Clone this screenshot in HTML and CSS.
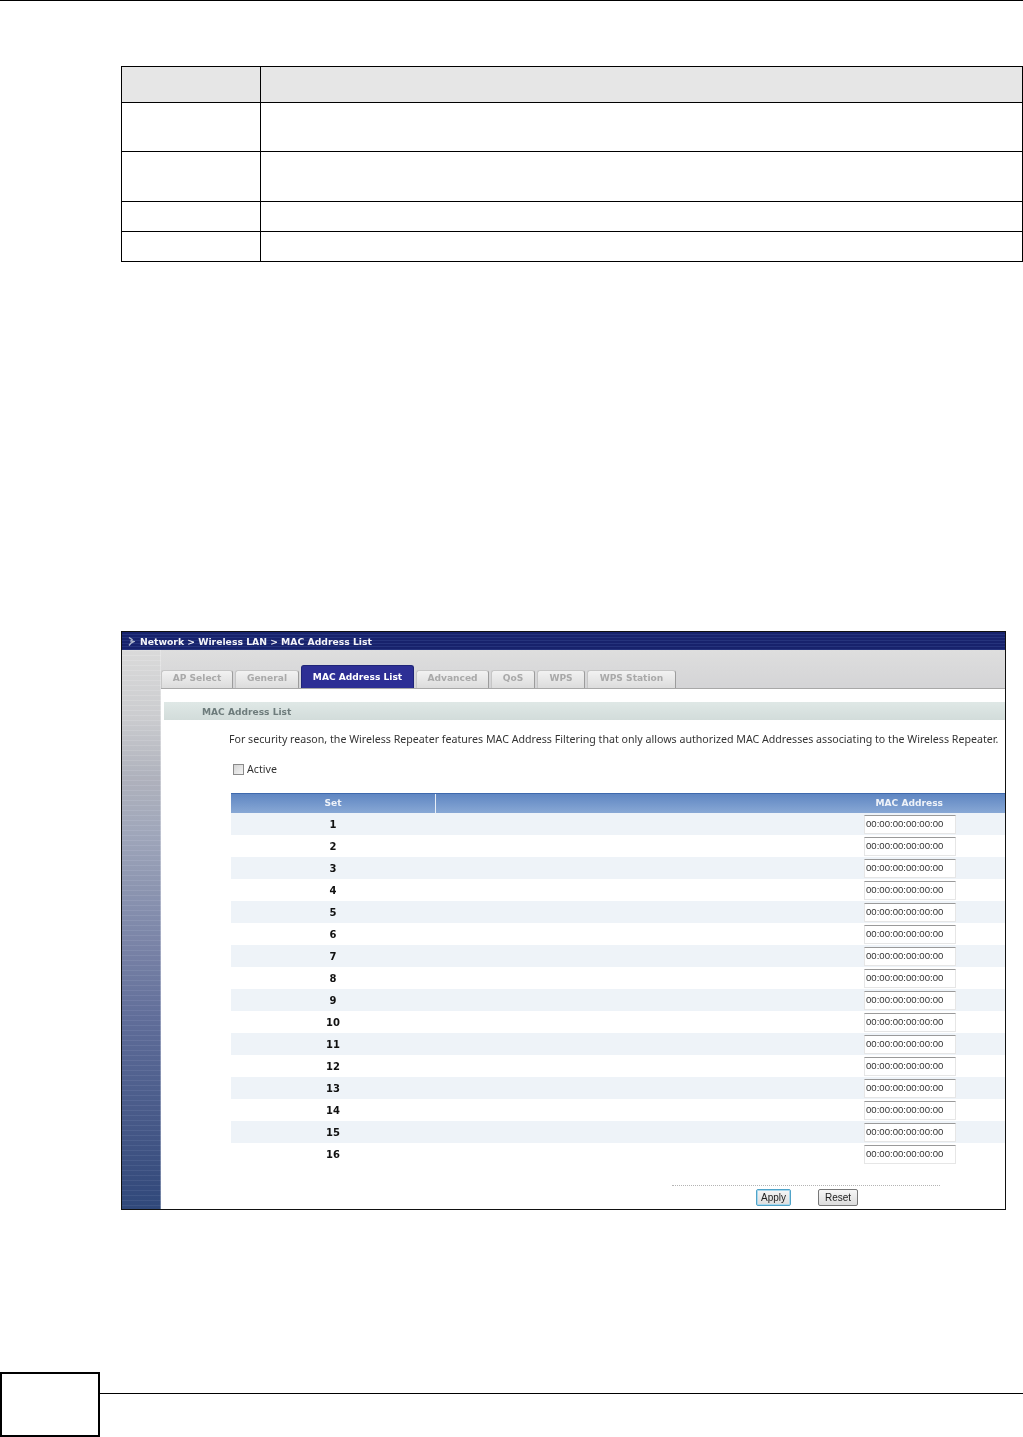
FILE: index.html
```html
<!DOCTYPE html>
<html lang="en">
<head>
<meta charset="utf-8">
<title>MAC Address List</title>
<link rel="stylesheet" href="styles.css">
</head>
<body>
<div class="page">
  <div class="top-rule"></div>
  <table class="doc-table">
    <tr class="head"><th></th><th></th></tr>
    <tr class="r49"><td></td><td></td></tr>
    <tr class="r50"><td></td><td></td></tr>
    <tr class="r30"><td></td><td></td></tr>
    <tr class="r30"><td></td><td></td></tr>
  </table>
  <div class="shot">
    <div class="title-bar">
      <svg class="crumb" width="7" height="11" viewBox="0 0 7 11"><path d="M1 1.5l3 2-1 1.500 3 0.500-3 1.500-2 2.500" fill="none" stroke="#aeb6cc" stroke-width="1.400"/></svg>
      <span>Network &gt; Wireless LAN &gt; MAC Address List</span>
    </div>
    <div class="shot-body">
      <div class="side"></div>
      <div class="main">
        <div class="tabs">
          <div class="tab w72"><span>AP Select</span></div>
          <div class="tab w65"><span>General</span></div>
          <div class="tab active"><span>MAC Address List</span></div>
          <div class="tab w73"><span>Advanced</span></div>
          <div class="tab w44"><span>QoS</span></div>
          <div class="tab w48"><span>WPS</span></div>
          <div class="tab w89"><span>WPS Station</span></div>
        </div>
        <div class="section">MAC Address List</div>
        <p class="intro">For security reason, the Wireless Repeater features MAC Address Filtering that only allows authorized MAC Addresses associating to the Wireless Repeater.</p>
        <label class="active-row"><span class="check"></span>Active</label>
        <div class="mac-table">
          <div class="mac-head"><div class="set-h">Set</div><div class="mac-h"><span>MAC Address</span></div></div>
          <div class="mac-row"><b>1</b><div class="field">00:00:00:00:00:00</div></div>
          <div class="mac-row"><b>2</b><div class="field">00:00:00:00:00:00</div></div>
          <div class="mac-row"><b>3</b><div class="field">00:00:00:00:00:00</div></div>
          <div class="mac-row"><b>4</b><div class="field">00:00:00:00:00:00</div></div>
          <div class="mac-row"><b>5</b><div class="field">00:00:00:00:00:00</div></div>
          <div class="mac-row"><b>6</b><div class="field">00:00:00:00:00:00</div></div>
          <div class="mac-row"><b>7</b><div class="field">00:00:00:00:00:00</div></div>
          <div class="mac-row"><b>8</b><div class="field">00:00:00:00:00:00</div></div>
          <div class="mac-row"><b>9</b><div class="field">00:00:00:00:00:00</div></div>
          <div class="mac-row"><b>10</b><div class="field">00:00:00:00:00:00</div></div>
          <div class="mac-row"><b>11</b><div class="field">00:00:00:00:00:00</div></div>
          <div class="mac-row"><b>12</b><div class="field">00:00:00:00:00:00</div></div>
          <div class="mac-row"><b>13</b><div class="field">00:00:00:00:00:00</div></div>
          <div class="mac-row"><b>14</b><div class="field">00:00:00:00:00:00</div></div>
          <div class="mac-row"><b>15</b><div class="field">00:00:00:00:00:00</div></div>
          <div class="mac-row"><b>16</b><div class="field">00:00:00:00:00:00</div></div>
        </div>
        <div class="actions">
          <div class="dots"></div>
          <div class="buttons"><div class="btn apply">Apply</div><div class="btn reset">Reset</div></div>
        </div>
      </div>
    </div>
  </div>
  <footer class="foot">
    <div class="page-box"></div>
    <div class="foot-rule"></div>
  </footer>
</div>
</body>
</html>
```

FILE: styles.css
```css
* { box-sizing: border-box; }
html, body { margin: 0; padding: 0; background: #fff; }
body { font-family: "DejaVu Sans", sans-serif; color: #333; }
.page { width: 1023px; height: 1437px; display: flex; flex-direction: column; overflow: hidden; }
.top-rule { height: 1px; background: #000; flex: none; }

.doc-table { flex: none; width: 902px; margin: 65px 0 0 121px; border-collapse: collapse; table-layout: fixed; }
.doc-table th, .doc-table td { border: 1px solid #000; padding: 0; }
.doc-table th:first-child, .doc-table td:first-child { width: 139px; }
.doc-table th { background: #e6e6e6; }
.head { height: 36px; }
.r49 { height: 49px; }
.r50 { height: 50px; }
.r30 { height: 30px; }

.shot { flex: none; width: 885px; height: 579px; margin: 369px 0 0 121px; border: 1px solid #111; display: flex; flex-direction: column; filter: blur(.35px); }
.title-bar { flex: none; height: 18px; display: flex; align-items: center; gap: 5px; padding-left: 6px; color: #f4f4f8; font-weight: 700; font-size: 9.25px; background: repeating-linear-gradient(180deg, #17226c 0, #17226c 2px, #25337c 2px, #25337c 3px); }
.crumb { flex: none; }
.shot-body { flex: 1; display: flex; min-height: 0; }
.side { flex: none; width: 39px; border-right: 1px solid rgba(255,255,255,.3); background: repeating-linear-gradient(180deg, rgba(255,255,255,.06) 0, rgba(255,255,255,.06) 1px, rgba(0,0,0,.02) 1px, rgba(0,0,0,.02) 5px), linear-gradient(180deg, #dedede 0, #cfd0d3 12%, #b2b5c0 23%, #a2a9be 33%, #626f9c 66%, #31497c 100%); }
.main { flex: 1; min-width: 0; display: flex; flex-direction: column; background: #fff; }

.tabs { flex: none; height: 39px; display: flex; align-items: flex-end; gap: 2px; border-bottom: 1px solid #a8a8a8; background: linear-gradient(180deg, #dedede 0, #d4d4d6 100%); }
.tab { height: 18px; display: flex; align-items: center; justify-content: center; padding-bottom: 3px; font-size: 9.1px; font-weight: 700; color: #a9a9a9; background: linear-gradient(180deg, #f2f2f2, #dcdcdc); border: 1px solid #c6c6c6; border-bottom: 0; border-right-color: #9c9c9c; border-radius: 3px 3px 0 0; }
.w72 { width: 72px; }
.w65 { width: 64px; }
.w73 { width: 73px; }
.w44 { width: 44px; }
.w48 { width: 48px; }
.w89 { width: 89px; }
.tab.active { width: 113px; height: 23px; padding-bottom: 1px; color: #fff; background: #2d2f95; border-color: #1e2478; }

.section { flex: none; height: 18px; margin: 13px 0 0 3px; padding: 1px 0 0 38px; display: flex; align-items: center; font-size: 9.1px; font-weight: 700; color: #6e7c7c; background: linear-gradient(180deg, #dfe8e6, #d2dcda); }
.intro { flex: none; margin: 12px 0 0 68px; height: 14px; line-height: 14px; font-family: "Noto Sans", sans-serif; font-size: 10.65px; color: #333; white-space: nowrap; }
.active-row { flex: none; height: 14px; margin: 16px 0 0 72px; display: flex; align-items: center; gap: 3px; font-family: "Noto Sans", sans-serif; font-size: 10.65px; color: #333; }
.check { width: 11px; height: 11px; border: 1px solid #8a8a8a; background: linear-gradient(135deg, #d4d4d4, #f4f4f4); }

.mac-table { flex: none; margin: 17px 0 0 70px; }
.mac-head { height: 20px; display: grid; grid-template-columns: 205px 1fr; border-top: 1px solid #3e69ad; background: linear-gradient(180deg, #5f86c2, #88a8d5); color: #eef2f8; font-size: 9.1px; font-weight: 700; }
.set-h { display: flex; align-items: center; justify-content: center; padding-bottom: 1px; border-right: 1px solid #e8eef6; }
.mac-h { display: flex; align-items: center; justify-content: flex-end; padding: 0 62px 1px 0; }
.mac-row { height: 22px; display: grid; grid-template-columns: 204px 1fr; align-items: center; justify-items: center; }
.mac-row:nth-child(even) { background: #eef3f8; }
.mac-row b { font-size: 10px; color: #111; }
.field { justify-self: end; margin-right: 49px; width: 92px; height: 19px; display: flex; align-items: center; padding: 0 0 1px 1px; background: #fff; border: 1px solid #e6e6e6; border-top-color: #9a9a9a; font-family: "Liberation Sans", sans-serif; font-size: 9.6px; color: #333; white-space: nowrap; }

.actions { flex: none; margin-top: 20px; }
.dots { margin-left: 511px; width: 268px; border-top: 1px dotted #b4b4b4; }
.buttons { display: flex; margin: 3px 0 0 595px; gap: 27px; }
.btn { height: 17px; display: flex; align-items: center; justify-content: center; font-family: "Liberation Sans", sans-serif; font-size: 10px; color: #222; border-radius: 2px; background: linear-gradient(180deg, #f6f6f6, #dcdcdc); border: 1px solid #777; }
.apply { width: 35px; border-color: #4fa3c8; box-shadow: inset 0 0 0 1px #a8d8ee; }
.reset { width: 40px; }

.foot { flex: none; height: 65px; margin-top: 162px; display: flex; }
.page-box { flex: none; width: 100px; height: 65px; border: 2px solid #000; }
.foot-rule { flex: 1; height: 1px; margin-top: 21px; background: #000; }
```
